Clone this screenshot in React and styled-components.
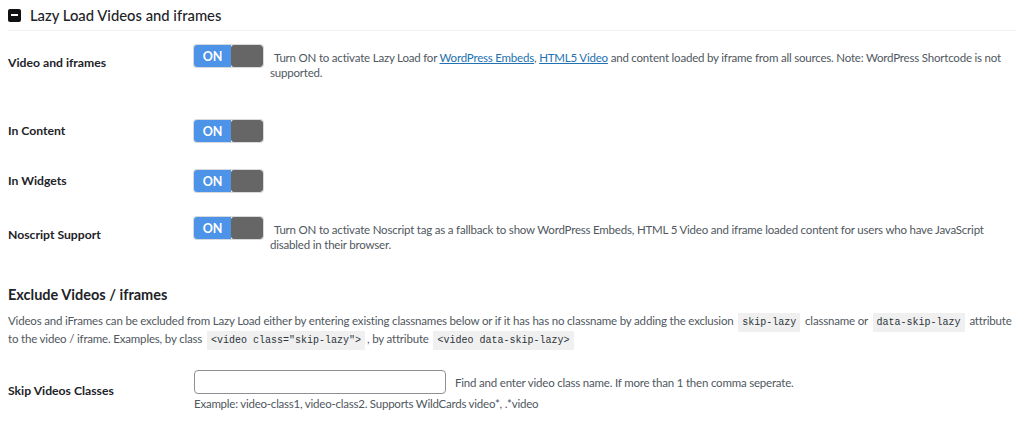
import React from "react";
import styled, { createGlobalStyle } from "styled-components";

const GlobalStyle = createGlobalStyle`
  body {
    margin: 0;
    background: #fff;
    font-family: Lato, "Open Sans", sans-serif;
    color: #1d2327;
  }
`;

function Toggle() {
  return (
    <ToggleBox>
      <ToggleOn>ON</ToggleOn>
      <ToggleKnob />
    </ToggleBox>
  );
}

function SettingRow({ label, children, space }) {
  return (
    <Row $space={space}>
      <Label>{label}</Label>
      <Field>
        <Toggle />
        {children && <Description>{children}</Description>}
      </Field>
    </Row>
  );
}

function App() {
  return (
    <>
      <GlobalStyle />
      <Page>
        <SectionHeader>
          <MinusIcon />
          <HeaderTitle>Lazy Load Videos and iframes</HeaderTitle>
        </SectionHeader>

        <Settings>
          <SettingRow label="Video and iframes" space={40}>
            Turn ON to activate Lazy Load for <Link>WordPress Embeds</Link>,{" "}
            <Link>HTML5 Video</Link> and content loaded by iframe from all
            sources. Note: WordPress Shortcode is not supported.
          </SettingRow>
          <SettingRow label="In Content" space={28} />
          <SettingRow label="In Widgets" space={25} />
          <SettingRow label="Noscript Support" space={0}>
            Turn ON to activate Noscript tag as a fallback to show WordPress
            Embeds, HTML 5 Video and iframe loaded content for users who have
            JavaScript disabled in their browser.
          </SettingRow>
        </Settings>

        <SubTitle>Exclude Videos / iframes</SubTitle>
        <Paragraph>
          Videos and iFrames can be excluded from Lazy Load either by entering
          existing classnames below or if it has has no classname by adding the
          exclusion <Code>skip-lazy</Code> classname or{" "}
          <Code>data-skip-lazy</Code> attribute to the video / iframe. Examples,
          by class <Code>&lt;video class="skip-lazy"&gt;</Code>, by attribute{" "}
          <Code>&lt;video data-skip-lazy&gt;</Code>
        </Paragraph>

        <InputRow>
          <Label>Skip Videos Classes</Label>
          <div>
            <InputLine>
              <TextInput type="text" />
              <Hint>
                Find and enter video class name. If more than 1 then comma
                seperate.
              </Hint>
            </InputLine>
            <Example>
              Example: video-class1, video-class2. Supports WildCards video*,
              .*video
            </Example>
          </div>
        </InputRow>
      </Page>
    </>
  );
}

const Page = styled.div`
  padding: 0 8px;
  width: 1008px;
`;

const SectionHeader = styled.div`
  display: flex;
  align-items: center;
  gap: 9px;
  height: 30px;
  border-bottom: 1px solid #f3f3f4;
`;

const MinusIcon = styled.span`
  position: relative;
  width: 13px;
  height: 13px;
  border-radius: 2px;
  background: #111;
  &::after {
    content: "";
    position: absolute;
    left: 3px;
    right: 3px;
    top: 5.5px;
    height: 2px;
    background: #fff;
  }
`;

const HeaderTitle = styled.h2`
  margin: 0;
  font-size: 14.8px;
  font-weight: 500;
  color: #1d2327;
`;

const Settings = styled.div`
  padding-top: 14px;
`;

const Row = styled.div`
  display: grid;
  grid-template-columns: 186px 1fr;
  align-items: center;
  margin-bottom: ${(p) => p.$space}px;
`;

const Label = styled.div`
  font-size: 12.2px;
  font-weight: 700;
  color: #1d2327;
  line-height: 18px;
`;

const Field = styled.div`
  display: flex;
  align-items: flex-start;
`;

const ToggleBox = styled.div`
  flex: none;
  display: flex;
  width: 69px;
  height: 22px;
  border-radius: 3px;
  overflow: hidden;
  box-shadow: 0 0 0 1px #d7d9dc;
`;

const ToggleOn = styled.span`
  width: 37px;
  background: #4d93e8;
  color: #fff;
  font-size: 12.5px;
  font-weight: 700;
  line-height: 23px;
  text-align: center;
`;

const ToggleKnob = styled.span`
  flex: 1;
  background: #666;
  border-radius: 3px;
`;

const Description = styled.p`
  margin: 5px 0 0 7px;
  text-indent: 4px;
  font-size: 11.5px;
  letter-spacing: -0.2px;
  line-height: 15px;
  color: #50575e;
`;

const Link = styled.a`
  color: #2271b1;
  text-decoration: underline;
  cursor: pointer;
`;

const SubTitle = styled.h3`
  margin: 33px 0 7px;
  font-size: 14.5px;
  font-weight: 700;
  line-height: 20px;
  color: #1d2327;
`;

const Paragraph = styled.p`
  margin: 0;
  font-size: 11.5px;
  letter-spacing: -0.18px;
  line-height: 18px;
  color: #50575e;
`;

const Code = styled.code`
  font-family: "Liberation Mono", monospace;
  font-size: 10px;
  letter-spacing: 0;
  line-height: 1;
  padding: 4px 4px;
  margin: 0 2px;
  background: #f0f0f1;
  color: #2c3338;
`;

const InputRow = styled.div`
  display: grid;
  grid-template-columns: 186px 1fr;
  align-items: center;
  margin-top: 22px;
`;

const InputLine = styled.div`
  display: flex;
  align-items: center;
  gap: 9px;
`;

const TextInput = styled.input`
  box-sizing: border-box;
  width: 252px;
  height: 24px;
  border: 1px solid #8c8f94;
  border-radius: 4px;
  padding: 0 8px;
`;

const Hint = styled.span`
  font-size: 11.5px;
  letter-spacing: -0.2px;
  color: #50575e;
`;

const Example = styled.div`
  margin-top: 2px;
  font-size: 11.5px;
  letter-spacing: -0.23px;
  line-height: 16px;
  color: #50575e;
`;

export default App;
